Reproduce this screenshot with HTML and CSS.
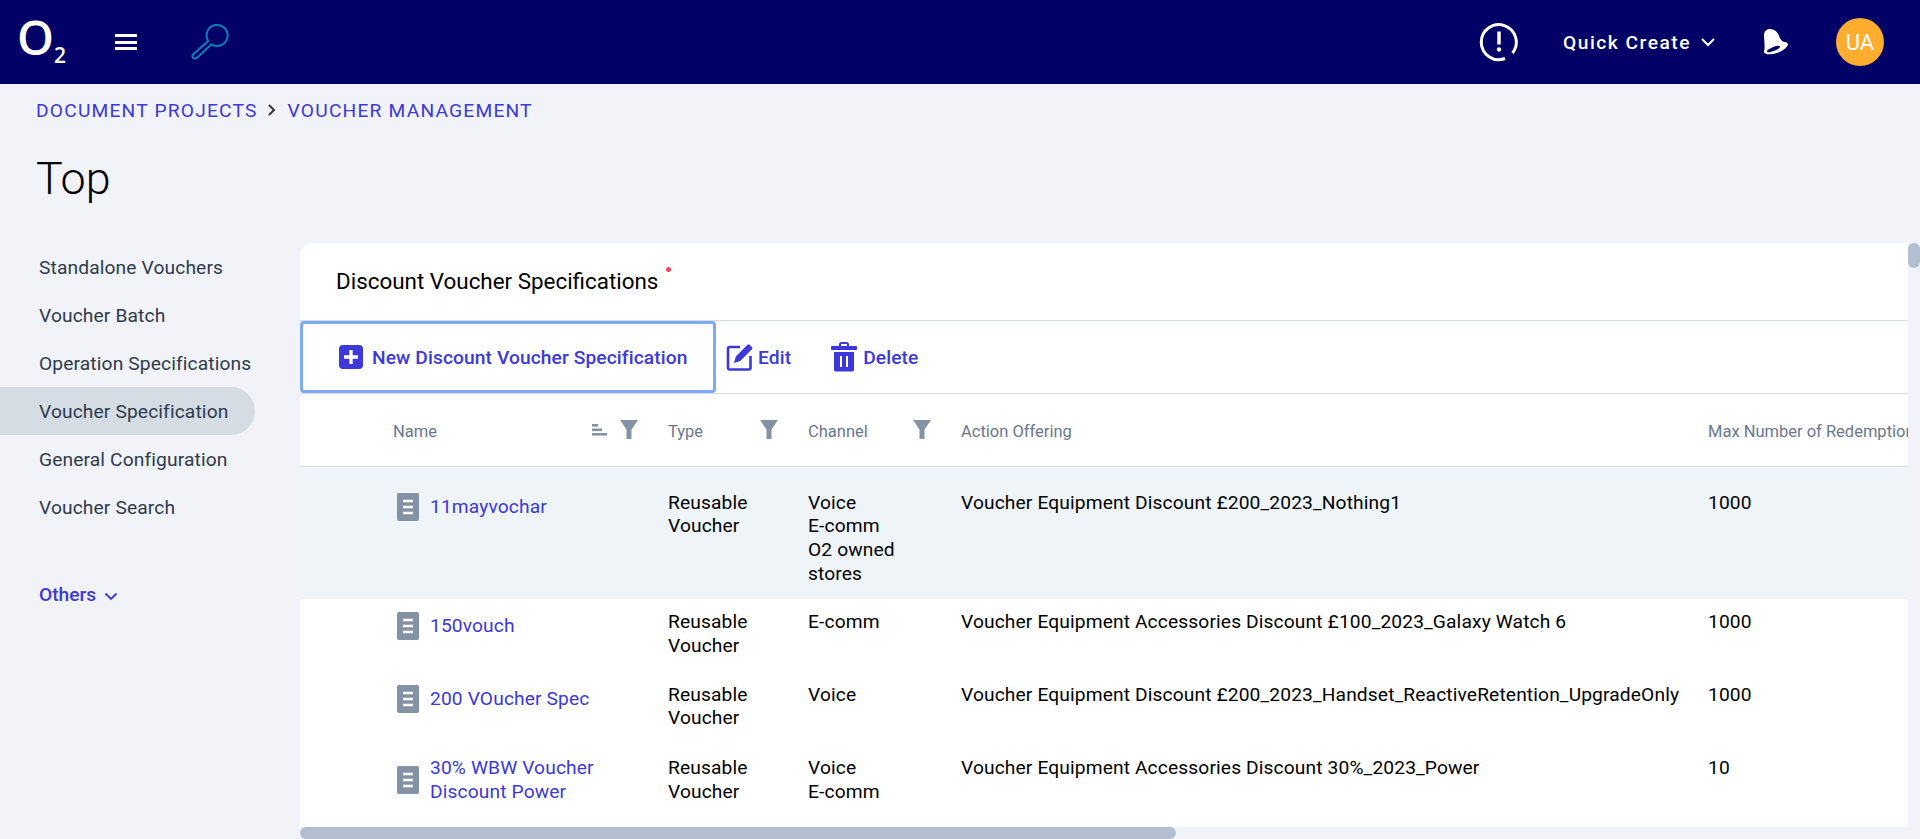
FILE: index.html
```html
<!DOCTYPE html>
<html lang="en">
<head>
    <meta charset="UTF-8">
    <meta name="viewport" content="width=device-width, initial-scale=1.0">
    <title>Voucher Specification</title>
    <link rel="stylesheet" href="styles.css">
</head>
<body>
    <!-- TOP BAR -->
    <header class="topbar">
        <div class="logo">O<span class="logo-sub">2</span></div>
        <div class="burger"><span></span><span></span><span></span></div>
        <svg class="search" width="60" height="55" viewBox="0 0 60 55" fill="none" stroke="#0b7db8" stroke-width="2">
            <path d="M28.2 26A10.5 10.5 0 1 1 31.5 29.3L17 42.8a2.6 2.6 0 0 1-3.8-3.6Z"/>
        </svg>
        <div class="topbar-right">
            <svg class="alert" width="40" height="40" viewBox="0 0 40 40" fill="none" stroke="#fff" stroke-width="3">
                <path d="M26 36.5A17.5 17.5 0 1 1 33.5 31"/>
                <path d="M20 9.500V22.500" stroke-width="3.500"/>
                <circle cx="20" cy="27.500" r="2.200" fill="#fff" stroke="none"/>
            </svg>
            <div class="quick">Quick Create
                <svg width="16" height="10" viewBox="0 0 16 10" fill="none" stroke="#fff" stroke-width="2"><path d="M2 2l6 6 6-6"/></svg>
            </div>
            <svg class="bell" width="50" height="45" viewBox="0 0 50 45">
                <path fill="#fff" d="M14 17C13.500 12 16 9 20 9c5 0 8.500 4 9.500 8 1 3.500 4.500 5.500 8.500 7.500L14 33c1-5 .500-11 0-16Z"/>
                <ellipse cx="26" cy="28" rx="12.500" ry="5" transform="rotate(-20 26 28)" fill="#fff"/>
                <ellipse cx="23.500" cy="29" rx="7" ry="2" transform="rotate(-22 23.500 29)" fill="#000066"/>
            </svg>
            <div class="avatar">UA</div>
        </div>
    </header>

    <nav class="crumbs">
        <a href="#">DOCUMENT PROJECTS</a>
        <svg class="crumb-sep" width="10" height="14" viewBox="0 0 10 14" fill="none" stroke="#333" stroke-width="2"><path d="M2 2l5 5-5 5"/></svg>
        <a href="#">VOUCHER MANAGEMENT</a>
    </nav>
    <h1 class="page-title">Top</h1>

    <div class="layout">
        <!-- LEFT MENU -->
        <aside class="side">
            <a class="side-item" href="#">Standalone Vouchers</a>
            <a class="side-item" href="#">Voucher Batch</a>
            <a class="side-item" href="#">Operation Specifications</a>
            <a class="side-item active" href="#">Voucher Specification</a>
            <a class="side-item" href="#">General Configuration</a>
            <a class="side-item" href="#">Voucher Search</a>
            <a class="side-more" href="#">Others
                <svg class="more-chevron" width="14" height="9" viewBox="0 0 14 9" fill="none" stroke="#3c38dc" stroke-width="1.800"><path d="M1.500 1.500L7 7l5.500-5.500"/></svg>
            </a>
        </aside>

        <div class="content">
            <main class="panel">
                <div class="panel-title">
                    <h2>Discount Voucher Specifications</h2><span class="req"></span>
                </div>
                <div class="toolbar">
                    <button class="tool tool-new">
                        <svg width="24" height="24" viewBox="0 0 24 24"><rect width="24" height="24" rx="4" fill="#3c38dc"/><path d="M12 5v14M5 12h14" stroke="#fff" stroke-width="3.400"/></svg>
                        New Discount Voucher Specification
                    </button>
                    <button class="tool tool-edit">
                        <svg width="27" height="28" viewBox="0 0 27 28" fill="none">
                            <path d="M14 4H3.500a1.500 1.500 0 0 0-1.500 1.500V25a1.500 1.500 0 0 0 1.500 1.500H23a1.500 1.500 0 0 0 1.500-1.500V13" stroke="#3c38dc" stroke-width="2.600"/>
                            <path d="M8 20l1.800-6.500L21.500 1.800a1.500 1.500 0 0 1 2.100 0l2.300 2.300a1.500 1.500 0 0 1 0 2.100L14.300 18Z" fill="#3c38dc"/>
                        </svg>
                        Edit
                    </button>
                    <button class="tool tool-delete">
                        <svg width="26" height="30" viewBox="0 0 26 30">
                            <path d="M9 4V2.500A1.500 1.500 0 0 1 10.500 1h5A1.500 1.500 0 0 1 17 2.500V4" fill="none" stroke="#3c38dc" stroke-width="2"/>
                            <rect y="4" width="26" height="4" rx="1" fill="#3c38dc"/>
                            <path d="M3 10h20v17.500a2 2 0 0 1-2 2H5a2 2 0 0 1-2-2Z" fill="#3c38dc"/>
                            <path d="M10 14v11M16 14v11" stroke="#fff" stroke-width="2"/>
                        </svg>
                        Delete
                    </button>
                </div>

                <div class="table-wrap">
                    <table class="grid">
                        <colgroup>
                            <col class="col-name"><col class="col-type"><col class="col-channel"><col class="col-action"><col class="col-max">
                        </colgroup>
                        <thead>
                            <tr>
                                <th class="th-name"><div class="th-in">Name
                                    <span class="th-icons">
                                        <svg width="15" height="12" viewBox="0 0 15 12" fill="#8492a6"><rect width="6" height="2.600"/><rect y="4.500" width="10" height="2.600"/><rect y="9" width="15" height="2.600"/></svg>
                                        <svg width="18" height="19" viewBox="0 0 18 19" fill="#8492a6"><path d="M0 0h18l-6.500 9.500V19h-5V9.500Z"/></svg>
                                    </span></div>
                                </th>
                                <th><div class="th-in">Type
                                    <svg class="funnel" width="18" height="19" viewBox="0 0 18 19" fill="#8492a6"><path d="M0 0h18l-6.500 9.500V19h-5V9.500Z"/></svg></div>
                                </th>
                                <th><div class="th-in">Channel
                                    <svg class="funnel" width="18" height="19" viewBox="0 0 18 19" fill="#8492a6"><path d="M0 0h18l-6.500 9.500V19h-5V9.500Z"/></svg></div>
                                </th>
                                <th>Action Offering</th>
                                <th>Max Number of Redemptions</th>
                            </tr>
                        </thead>
                        <tbody>
                            <tr class="row-hover">
                                <td class="td-name"><div class="doc">
                                    <svg class="doc-icon" width="22" height="28" viewBox="0 0 22 28"><rect width="22" height="28" rx="2" fill="#8492a6"/><path d="M6 8h10M6 14h10M6 20h10" stroke="#fff" stroke-width="2.600"/></svg>
                                    <a href="#">11mayvochar</a></div>
                                </td>
                                <td>Reusable<br>Voucher</td>
                                <td>Voice<br>E-comm<br>O2 owned<br>stores</td>
                                <td>Voucher Equipment Discount £200_2023_Nothing1</td>
                                <td>1000</td>
                            </tr>
                            <tr>
                                <td class="td-name"><div class="doc">
                                    <svg class="doc-icon" width="22" height="28" viewBox="0 0 22 28"><rect width="22" height="28" rx="2" fill="#8492a6"/><path d="M6 8h10M6 14h10M6 20h10" stroke="#fff" stroke-width="2.600"/></svg>
                                    <a href="#">150vouch</a></div>
                                </td>
                                <td>Reusable<br>Voucher</td>
                                <td>E-comm</td>
                                <td>Voucher Equipment Accessories Discount £100_2023_Galaxy Watch 6</td>
                                <td>1000</td>
                            </tr>
                            <tr>
                                <td class="td-name"><div class="doc">
                                    <svg class="doc-icon" width="22" height="28" viewBox="0 0 22 28"><rect width="22" height="28" rx="2" fill="#8492a6"/><path d="M6 8h10M6 14h10M6 20h10" stroke="#fff" stroke-width="2.600"/></svg>
                                    <a href="#">200 VOucher Spec</a></div>
                                </td>
                                <td>Reusable<br>Voucher</td>
                                <td>Voice</td>
                                <td>Voucher Equipment Discount £200_2023_Handset_ReactiveRetention_UpgradeOnly</td>
                                <td>1000</td>
                            </tr>
                            <tr class="row-last">
                                <td class="td-name"><div class="doc">
                                    <svg class="doc-icon" width="22" height="28" viewBox="0 0 22 28"><rect width="22" height="28" rx="2" fill="#8492a6"/><path d="M6 8h10M6 14h10M6 20h10" stroke="#fff" stroke-width="2.600"/></svg>
                                    <a href="#">30% WBW Voucher<br>Discount Power</a></div>
                                </td>
                                <td>Reusable<br>Voucher</td>
                                <td>Voice<br>E-comm</td>
                                <td>Voucher Equipment Accessories Discount 30%_2023_Power</td>
                                <td>10</td>
                            </tr>
                        </tbody>
                    </table>
                </div>
            </main>
            <div class="vbar"><div class="vthumb"></div></div>
            <div class="hbar"><div class="hthumb"></div></div>
        </div>
    </div>
</body>
</html>
```

FILE: styles.css
```css
/*PAGE*/
html, body {
    height: 100%;
}
body {
    margin: 0;
    overflow: hidden;
    display: flex;
    flex-direction: column;
    background-color: #f1f3f8;
    font-family: Roboto, "Liberation Sans", sans-serif;
    color: #000;
}
a {
    color: #3c38dc;
    text-decoration: none;
}

/*TOP BAR*/
.topbar {
    height: 84px;
    flex: none;
    display: flex;
    align-items: center;
    background-color: #000066;
    color: #fff;
}
.logo {
    margin: 0 0 11px 17px;
    width: 48px;
    font-family: "Open Sans", sans-serif;
    font-size: 47px;
    line-height: 60px;
    font-weight: 600;
    white-space: nowrap;
}
.logo-sub {
    font-size: 21px;
    line-height: 0;
    vertical-align: -8px;
}
.burger {
    margin-left: 50px;
    width: 22px;
    display: flex;
    flex-direction: column;
    gap: 3.5px;
}
.burger span {
    height: 3px;
    background-color: #fff;
}
.search {
    margin-left: 43px;
}
.topbar-right {
    margin-left: auto;
    display: flex;
    align-items: center;
}
.alert {
    margin-right: 44px;
}
.quick {
    display: flex;
    align-items: center;
    gap: 9px;
    font-size: 19.2px;
    font-weight: 500;
    letter-spacing: 1.5px;
}
.bell {
    margin-left: 34px;
}
.avatar {
    margin-left: 36px;
    margin-right: 36px;
    width: 48px;
    height: 48px;
    border-radius: 50%;
    background-color: #ffad2e;
    display: flex;
    align-items: center;
    justify-content: center;
    font-size: 22px;
}

/*BREADCRUMB AND TITLE*/
.crumbs {
    flex: none;
    height: 52px;
    padding-left: 36px;
    display: flex;
    align-items: center;
    gap: 9px;
    font-size: 19.2px;
    letter-spacing: 1.2px;
}
.crumb-sep {
    margin-right: 2px;
}
.page-title {
    flex: none;
    margin: 0;
    height: 107px;
    padding: 18px 0 0 36px;
    box-sizing: border-box;
    font-size: 44.8px;
    line-height: 50px;
    font-weight: 300;
}

/*LAYOUT*/
.layout {
    flex: 1;
    min-height: 0;
    display: flex;
}
.side {
    width: 300px;
    flex: none;
    display: flex;
    flex-direction: column;
}
.side-item {
    width: 255px;
    height: 48px;
    box-sizing: border-box;
    padding: 1px 0 0 39px;
    line-height: 47px;
    font-size: 19.2px;
    letter-spacing: 0.13px;
    color: #2e3a4e;
}
.side-item.active {
    background-color: #d6dce4;
    border-radius: 0 24px 24px 0;
}
.side-more {
    margin-top: 52px;
    padding-left: 39px;
    font-size: 19.2px;
    font-weight: 500;
    display: flex;
    align-items: center;
    gap: 8px;
}
.more-chevron {
    margin-top: 4px;
}
.content {
    flex: 1;
    min-width: 0;
    display: grid;
    grid-template-columns: 1fr 12px;
    grid-template-rows: 1fr 12px;
}

/*PANEL*/
.panel {
    min-width: 0;
    min-height: 0;
    overflow: hidden;
    background-color: #fff;
    border-top-left-radius: 14px;
}
.panel-title {
    height: 75px;
    padding: 0 0 2px 36px;
    display: flex;
    align-items: center;
    border-bottom: 1px solid #d5dbe5;
}
.panel-title h2 {
    margin: 0;
    font-size: 22.4px;
    font-weight: 400;
}
.req {
    width: 5px;
    height: 5px;
    margin-left: 8px;
    margin-bottom: 22px;
    border-radius: 50%;
    background-color: #f5455c;
}
.toolbar {
    height: 72px;
    display: flex;
    align-items: center;
    border-bottom: 1px solid #d5dbe5;
}
.tool {
    display: flex;
    align-items: center;
    gap: 8px;
    padding: 0;
    border: none;
    background: none;
    color: #3c38dc;
    font-family: inherit;
    font-size: 19.2px;
    letter-spacing: 0.1px;
    font-weight: 500;
    cursor: pointer;
}
.tool-new {
    width: 416px;
    height: 72px;
    padding-left: 36px;
    box-sizing: border-box;
    border: 3px solid #7eaaf5;
    border-radius: 4px;
    gap: 9px;
}
.tool-edit {
    margin-left: 10px;
    gap: 5px;
}
.tool-delete {
    margin-left: 40px;
    gap: 6px;
}

/*TABLE*/
.table-wrap {
    overflow: hidden;
}
.grid {
    width: 1700px;
    table-layout: fixed;
    border-collapse: collapse;
    font-size: 19.2px;
    letter-spacing: 0.13px;
    line-height: 23.7px;
}
.col-name { width: 360px; }
.col-type { width: 140px; }
.col-channel { width: 153px; }
.col-action { width: 747px; }
.col-max { width: 300px; }
.grid th {
    height: 72px;
    padding: 4px 0 0 8px;
    box-sizing: border-box;
    text-align: left;
    font-size: 16.5px;
    letter-spacing: 0;
    font-weight: 400;
    color: #6b778c;
    border-bottom: 1px solid #d5dbe5;
    white-space: nowrap;
}
.grid .th-name {
    padding-left: 93px;
}
.th-in {
    display: flex;
    align-items: center;
    justify-content: space-between;
    padding-right: 22px;
}
.th-icons {
    display: flex;
    align-items: center;
    gap: 13px;
    margin-bottom: 4px;
}
.funnel {
    margin-bottom: 4px;
}
.grid td {
    padding: 11px 0 14px 8px;
    vertical-align: top;
}
.grid .td-name {
    padding-left: 97px;
}
.row-hover {
    background-color: #eff4f8;
}
.grid .row-hover td {
    padding-top: 24px;
    padding-bottom: 14px;
}
.grid .row-last td {
    padding-top: 12px;
}
.doc {
    display: flex;
    align-items: center;
    gap: 11px;
    min-height: 32px;
}
.doc-icon {
    flex: none;
}

/*SCROLLBARS*/
.vbar {
    grid-column: 2;
    grid-row: 1;
}
.vthumb {
    height: 25px;
    border-radius: 6px;
    background-color: #b3bfd1;
}
.hbar {
    grid-column: 1;
    grid-row: 2;
}
.hthumb {
    width: 876px;
    height: 12px;
    border-radius: 6px;
    background-color: #b3bfd1;
}
```
